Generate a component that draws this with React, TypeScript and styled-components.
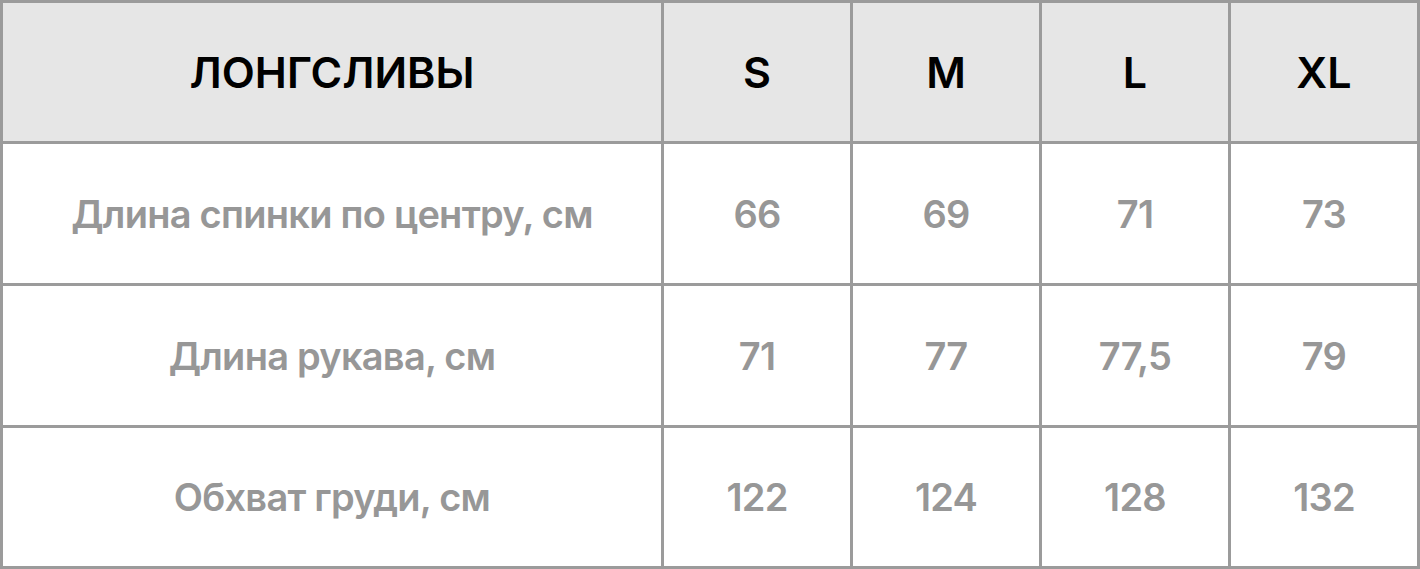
import React from 'react'
import styled, { createGlobalStyle } from 'styled-components'

const GlobalStyle = createGlobalStyle`
  html, body {
    margin: 0;
    padding: 0;
    background: #ffffff;
  }
  body {
    font-family: "Inter", "Noto Sans", sans-serif;
  }
`

const Table = styled.div`
  display: grid;
  grid-template-columns: 658px repeat(4, 186px);
  grid-template-rows: 138px 139px 139px 138px;
  gap: 3px;
  padding: 3px;
  width: 1420px;
  height: 569px;
  box-sizing: border-box;
  background: #9b9b9b;
`

const Cell = styled.div<{ $head?: boolean }>`
  display: flex;
  align-items: center;
  justify-content: center;
  background: ${p => (p.$head ? '#e6e6e6' : '#ffffff')};
  color: ${p => (p.$head ? '#000000' : '#979797')};
  font-family: "Inter", sans-serif;
  font-size: ${p => (p.$head ? '43px' : '38px')};
  font-weight: ${p => (p.$head ? 600 : 600)};
  letter-spacing: ${p => (p.$head ? '0px' : '-0.75px')};
  white-space: nowrap;
`

const sizes = ['S', 'M', 'L', 'XL']

const rows: { label: string; values: string[] }[] = [
  { label: 'Длина спинки по центру, см', values: ['66', '69', '71', '73'] },
  { label: 'Длина рукава, см', values: ['71', '77', '77,5', '79'] },
  { label: 'Обхват груди, см', values: ['122', '124', '128', '132'] },
]

const App = () => {
  return (
    <>
      <GlobalStyle />
      <Table>
        <Cell $head>ЛОНГСЛИВЫ</Cell>
        {sizes.map(s => (
          <Cell $head key={s}>{s}</Cell>
        ))}
        {rows.map(r => (
          <React.Fragment key={r.label}>
            <Cell>{r.label}</Cell>
            {r.values.map((v, i) => (
              <Cell key={i}>{v}</Cell>
            ))}
          </React.Fragment>
        ))}
      </Table>
    </>
  )
}

export default App
